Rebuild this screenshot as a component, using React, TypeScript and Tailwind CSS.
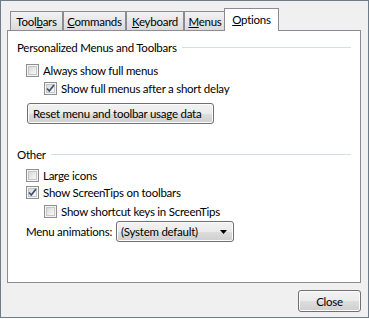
import React from 'react';

const font = { fontFamily: 'Lato, "Noto Sans", sans-serif' };

const CheckBox = ({ checked }: { checked?: boolean }) => (
  <svg width="13" height="13" viewBox="0 0 13 13" className="shrink-0">
    <defs>
      <linearGradient id="cbg" x1="0" y1="0" x2="1" y2="1">
        <stop offset="0" stopColor="#d6d6d6" />
        <stop offset="1" stopColor="#fbfbfb" />
      </linearGradient>
    </defs>
    <rect x="0.5" y="0.5" width="12" height="12" fill="#f4f4f4" stroke="#8e8f8f" />
    <rect x="2.5" y="2.5" width="8" height="8" fill="url(#cbg)" stroke="#c6c6c6" />
    {checked && (
      <path d="M3 6.5 L5.3 9 L10 3" fill="none" stroke="#3c4f72" strokeWidth="1.7" />
    )}
  </svg>
);

const Check = ({ label, checked, indent }: { label: string; checked?: boolean; indent?: boolean }) => (
  <div className={`flex items-center h-[17px] gap-[4px] whitespace-nowrap ${indent ? 'pl-[36px]' : 'pl-[18px]'}`}>
    <CheckBox checked={checked} />
    <span>{label}</span>
  </div>
);

const Section = ({ title }: { title: string }) => (
  <div className="flex items-center h-[15px] pl-[9px] pr-[9px] whitespace-nowrap">
    <span>{title}</span>
    <div className="flex-1 h-px bg-[#d5dfe5] ml-[5px]" />
  </div>
);

const tabs = [
  { pre: 'Tool', key: 'b', post: 'ars', w: 'w-[53px]' },
  { pre: '', key: 'C', post: 'ommands', w: 'w-[63px]' },
  { pre: '', key: 'K', post: 'eyboard', w: 'w-[58px]' },
  { pre: '', key: 'M', post: 'enus', w: 'w-[42px]' },
];

const winButton =
  'border border-[#707070] rounded-[3px] bg-[linear-gradient(#f2f2f2_0%,#ebebeb_50%,#dddddd_51%,#cfcfcf_100%)] shadow-[inset_0_0_0_1px_#fcfcfc]';

export default function App() {
  return (
    <div
      className="w-[369px] h-[318px] bg-[#f0f0f0] border border-[#6e7c8a] text-[11.5px] tracking-[-0.25px] text-black leading-[15px] flex flex-col pt-[7px] pl-[6px]"
      style={font}
    >
      {/* tab strip */}
      <div className="flex items-end h-[22px] pl-[3px]">
        {tabs.map((t) => (
          <div
            key={t.key}
            className={`${t.w} h-[19px] border border-b-0 border-[#898c95] bg-[linear-gradient(#f2f2f2,#dbdbdb)] flex items-center justify-center whitespace-nowrap`}
          >
            <span>
              {t.pre}
              <span className="underline">{t.key}</span>
              {t.post}
            </span>
          </div>
        ))}
        <div className="relative z-10 -ml-[2px] -mb-px w-[55px] h-[23px] border border-b-0 border-[#898c95] bg-white flex items-start justify-center pt-[3px]">
          <span>
            <span className="underline">O</span>ptions
          </span>
        </div>
      </div>

      {/* panel */}
      <div className="w-[354px] h-[253px] border border-[#898c95] bg-white flex flex-col pt-[9px]">
        <Section title="Personalized Menus and Toolbars" />
        <div className="h-[7px]" />
        <Check label="Always show full menus" />
        <div className="h-[1px]" />
        <Check label="Show full menus after a short delay" checked indent />
        <div className="pl-[19px] pt-[6px]">
          <div className={`${winButton} w-[187px] h-[21px] flex items-center pl-[5px] whitespace-nowrap`}>
            Reset menu and toolbar usage data
          </div>
        </div>
        <div className="h-[23px]" />
        <Section title="Other" />
        <div className="h-[5px]" />
        <Check label="Large icons" />
        <Check label="Show ScreenTips on toolbars" checked />
        <div className="h-[2px]" />
        <Check label="Show shortcut keys in ScreenTips" indent />
        <div className="flex items-center pl-[18px] pt-[1px] whitespace-nowrap">
          <span className="w-[90px]">Menu animations:</span>
          <div className={`${winButton} w-[118px] h-[21px] flex items-center justify-between pl-[4px] pr-[6px]`}>
            <span>(System default)</span>
            <svg width="7" height="4" viewBox="0 0 7 4">
              <path d="M0 0 H7 L3.5 4 Z" fill="#000" />
            </svg>
          </div>
        </div>
      </div>

      {/* footer */}
      <div className="flex justify-end pr-[7px] pt-[7px]">
        <div className={`${winButton} w-[63px] h-[22px] flex items-center justify-center`}>Close</div>
      </div>
    </div>
  );
}
